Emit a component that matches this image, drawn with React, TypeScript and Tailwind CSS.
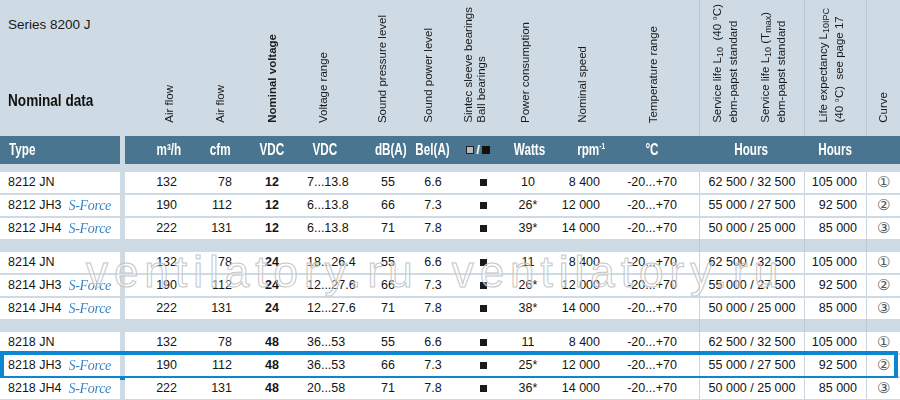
const COLS = 'grid grid-cols-[70px_51px_52px_57px_54px_45px_48px_56px_62px_79px_105px_62px_34px]'

type Row = {
  type: string
  sforce?: boolean
  m3h: string
  cfm: string
  vn: string
  vr: string
  spl: string
  swl: string
  watts: string
  rpm: string
  life: string
  life2: string
  curve: string
  hl?: boolean
}

const groups: Row[][] = [
  [
    { type: '8212 JN', m3h: '132', cfm: '78', vn: '12', vr: '7...13.8', spl: '55', swl: '6.6', watts: '10', rpm: '8 400', life: '62 500 / 32 500', life2: '105 000', curve: '①' },
    { type: '8212 JH3', sforce: true, m3h: '190', cfm: '112', vn: '12', vr: '6...13.8', spl: '66', swl: '7.3', watts: '26*', rpm: '12 000', life: '55 000 / 27 500', life2: '92 500', curve: '②' },
    { type: '8212 JH4', sforce: true, m3h: '222', cfm: '131', vn: '12', vr: '6...13.8', spl: '71', swl: '7.8', watts: '39*', rpm: '14 000', life: '50 000 / 25 000', life2: '85 000', curve: '③' },
  ],
  [
    { type: '8214 JN', m3h: '132', cfm: '78', vn: '24', vr: '18...26.4', spl: '55', swl: '6.6', watts: '11', rpm: '8 400', life: '62 500 / 32 500', life2: '105 000', curve: '①' },
    { type: '8214 JH3', sforce: true, m3h: '190', cfm: '112', vn: '24', vr: '12...27.6', spl: '66', swl: '7.3', watts: '26*', rpm: '12 000', life: '55 000 / 27 500', life2: '92 500', curve: '②' },
    { type: '8214 JH4', sforce: true, m3h: '222', cfm: '131', vn: '24', vr: '12...27.6', spl: '71', swl: '7.8', watts: '38*', rpm: '14 000', life: '50 000 / 25 000', life2: '85 000', curve: '③' },
  ],
  [
    { type: '8218 JN', m3h: '132', cfm: '78', vn: '48', vr: '36...53', spl: '55', swl: '6.6', watts: '11', rpm: '8 400', life: '62 500 / 32 500', life2: '105 000', curve: '①' },
    { type: '8218 JH3', sforce: true, m3h: '190', cfm: '112', vn: '48', vr: '36...53', spl: '66', swl: '7.3', watts: '25*', rpm: '12 000', life: '55 000 / 27 500', life2: '92 500', curve: '②', hl: true },
    { type: '8218 JH4', sforce: true, m3h: '222', cfm: '131', vn: '48', vr: '20...58', spl: '71', swl: '7.8', watts: '36*', rpm: '14 000', life: '50 000 / 25 000', life2: '85 000', curve: '③' },
  ],
]

function SForce() {
  return (
    <span className="font-['Liberation_Serif',serif] italic text-[14px] tracking-[-0.3px] bg-gradient-to-b from-[#4aa3e0] to-[#1a5ea8] bg-clip-text text-transparent">
      S-Force
    </span>
  )
}

function V({ children, bold }: { children: React.ReactNode; bold?: boolean }) {
  return (
    <div
      className={
        bold
          ? '[writing-mode:vertical-rl] rotate-180 whitespace-nowrap text-[11.5px] leading-[13px] font-bold'
          : '[writing-mode:vertical-rl] rotate-180 whitespace-nowrap text-[11.5px] leading-[13px]'
      }
    >
      {children}
    </div>
  )
}

function Sub({ children }: { children: React.ReactNode }) {
  return <span className="text-[9px] align-sub">{children}</span>
}

// condensed bold text (no condensed face installed, so squeeze it)
function Cond({ children }: { children: React.ReactNode }) {
  return <span className="inline-block scale-x-[0.73] whitespace-nowrap">{children}</span>
}

function Header() {
  return (
    <div className="flex h-[136px]">
      {/* title block */}
      <div className="w-[125px] pl-[8px] pt-[16px] flex flex-col">
        <div className="text-[13.5px] leading-[18px] text-[#1a1a1a]">Series 8200 J</div>
        <div className="mt-[57px] text-[16px] leading-[20px] font-bold text-[#111]">
          <span className="inline-block origin-left scale-x-[0.85] whitespace-nowrap">Nominal data</span>
        </div>
      </div>

      {/* rotated column labels */}
      <div className={`${COLS} flex-1 text-[#1a1a1a]`}>
        <div className="flex items-end justify-center pb-[13px] pl-[18px]"><V>Air flow</V></div>
        <div className="flex items-end justify-center pb-[13px]"><V>Air flow</V></div>
        <div className="flex items-end justify-center pb-[13px]"><V bold>Nominal voltage</V></div>
        <div className="flex items-end justify-center pb-[13px] pr-[6px]"><V>Voltage range</V></div>
        <div className="flex items-end justify-center pb-[13px]"><V>Sound pressure level</V></div>
        <div className="flex items-end justify-center pb-[13px] pr-[6px]"><V>Sound power level</V></div>
        <div className="flex items-end justify-center pb-[13px] pr-[6px]">
          <V>
            Sintec sleeve bearings
            <br />
            Ball bearings
          </V>
        </div>
        <div className="flex items-end justify-center pb-[13px] pr-[10px]"><V>Power consumption</V></div>
        <div className="flex items-end justify-center pb-[13px] pr-[14px]"><V>Nominal speed</V></div>
        <div className="flex items-end justify-center pb-[13px] pr-[13px]"><V>Temperature range</V></div>
        <div className="flex items-end justify-center gap-[19px] pb-[13px] pr-[5px] border-l border-[#b9c8d4]">
          <V>
            Service life L<Sub>10</Sub>&nbsp; (40 °C)
            <br />
            ebm-papst standard
          </V>
          <V>
            Service life L<Sub>10</Sub> (T<Sub>max</Sub>)
            <br />
            ebm-papst standard
          </V>
        </div>
        <div className="flex items-end justify-center pb-[13px] pr-[8px] border-l border-[#b9c8d4]">
          <V>
            Life expectancy L<Sub>10IPC</Sub>
            <br />
            (40 °C)&nbsp; see page 17
          </V>
        </div>
        <div className="flex items-end justify-center pb-[13px] border-l border-[#b9c8d4]"><V>Curve</V></div>
      </div>
    </div>
  )
}

function Band() {
  return (
    <div className="flex h-[28px] text-white font-bold text-[16px] leading-[28px]">
      <div className="w-[120px] bg-[#4a7591] pl-[9px]">
        <span className="inline-block origin-left scale-x-[0.73]">Type</span>
      </div>
      <div className="w-[5px]" />
      <div className={`${COLS} flex-1 bg-[#4a7591] text-center`}>
        <div className="pl-[18px]"><Cond>m³/h</Cond></div>
        <div><Cond>cfm</Cond></div>
        <div><Cond>VDC</Cond></div>
        <div className="pr-[3px]"><Cond>VDC</Cond></div>
        <div className="pl-[14px]"><Cond>dB(A)</Cond></div>
        <div><Cond>Bel(A)</Cond></div>
        <div className="flex items-center justify-center gap-[2px]">
          <span className="inline-block w-[8px] h-[8px] bg-[#b9b9b9] border border-[#222]" />
          <span className="text-[13px]">/</span>
          <span className="inline-block w-[8px] h-[8px] bg-[#111]" />
        </div>
        <div className="pr-[2px]"><Cond>Watts</Cond></div>
        <div className="pl-[4px]">
          <Cond>
            rpm<span className="text-[9px] align-super leading-none">-1</span>
          </Cond>
        </div>
        <div className="pr-[15px]"><Cond>°C</Cond></div>
        <div><Cond>Hours</Cond></div>
        <div><Cond>Hours</Cond></div>
        <div />
      </div>
    </div>
  )
}

function DataRow({ r }: { r: Row }) {
  return (
    <div className="relative flex h-[21px] leading-[21px] text-[12.5px] text-[#151515]">
      <div className="w-[120px] bg-white pl-[8px] flex items-center gap-[7px]">
        <span>{r.type}</span>
        {r.sforce && <SForce />}
      </div>
      <div className="w-[5px]" />
      <div className={`${COLS} flex-1 bg-white`}>
        <div className="text-right pr-[18px]">{r.m3h}</div>
        <div className="text-right pr-[14px]">{r.cfm}</div>
        <div className="text-center font-bold">{r.vn}</div>
        <div className="pl-[9px]">{r.vr}</div>
        <div className="text-center pl-[12px]">{r.spl}</div>
        <div className="text-center pl-[3px]">{r.swl}</div>
        <div className="flex items-center justify-center pl-[10px]">
          <span className="inline-block w-[7px] h-[7px] bg-[#1a1a1a]" />
        </div>
        <div className="text-center pr-[4px]">{r.watts}</div>
        <div className="text-right pr-[20px]">{r.rpm}</div>
        <div className="text-center pr-[15px]">-20...+70</div>
        <div className="text-center border-l border-[#c8d5df]">{r.life}</div>
        <div className="text-right pr-[9px] border-l border-[#c8d5df]">{r.life2}</div>
        <div className="text-center border-l border-[#c8d5df] text-[#555] text-[15px] font-['DejaVu_Sans',sans-serif] font-light">
          {r.curve}
        </div>
      </div>
      {r.hl && (
        <div className="absolute left-0 right-[2px] -top-[4px] -bottom-[4px] border-4 border-[#0b86d1]" />
      )}
    </div>
  )
}

function GroupGap() {
  return (
    <div className="flex h-[13px]">
      <div className="w-[125px]" />
      <div className={`${COLS} flex-1`}>
        <div />
        <div />
        <div />
        <div />
        <div />
        <div />
        <div />
        <div />
        <div />
        <div />
        <div className="border-l border-[#bccbd6]" />
        <div className="border-l border-[#bccbd6]" />
        <div className="border-l border-[#bccbd6]" />
      </div>
    </div>
  )
}

export default function App() {
  return (
    <div className="relative w-[900px] h-[400px] overflow-hidden bg-[#cfdbe4] font-['Liberation_Sans',Arial,sans-serif]">
      <Header />
      <Band />
      <div className="h-[8px]" />
      {groups.map((g, gi) => (
        <div key={gi}>
          {gi > 0 && <GroupGap />}
          <div className="flex flex-col gap-[2px]">
            {g.map((r) => (
              <DataRow key={r.type} r={r} />
            ))}
          </div>
        </div>
      ))}

      {/* watermark */}
      <div className="pointer-events-none absolute left-0 right-0 top-[250px] flex text-[44px] leading-[44px] tracking-[6px] text-white/30 [-webkit-text-stroke:1px_#c6c6c6]">
        <span className="ml-[86px]">ventilatory.ru</span>
        <span className="ml-[33px]">ventilatory.ru</span>
      </div>
    </div>
  )
}
